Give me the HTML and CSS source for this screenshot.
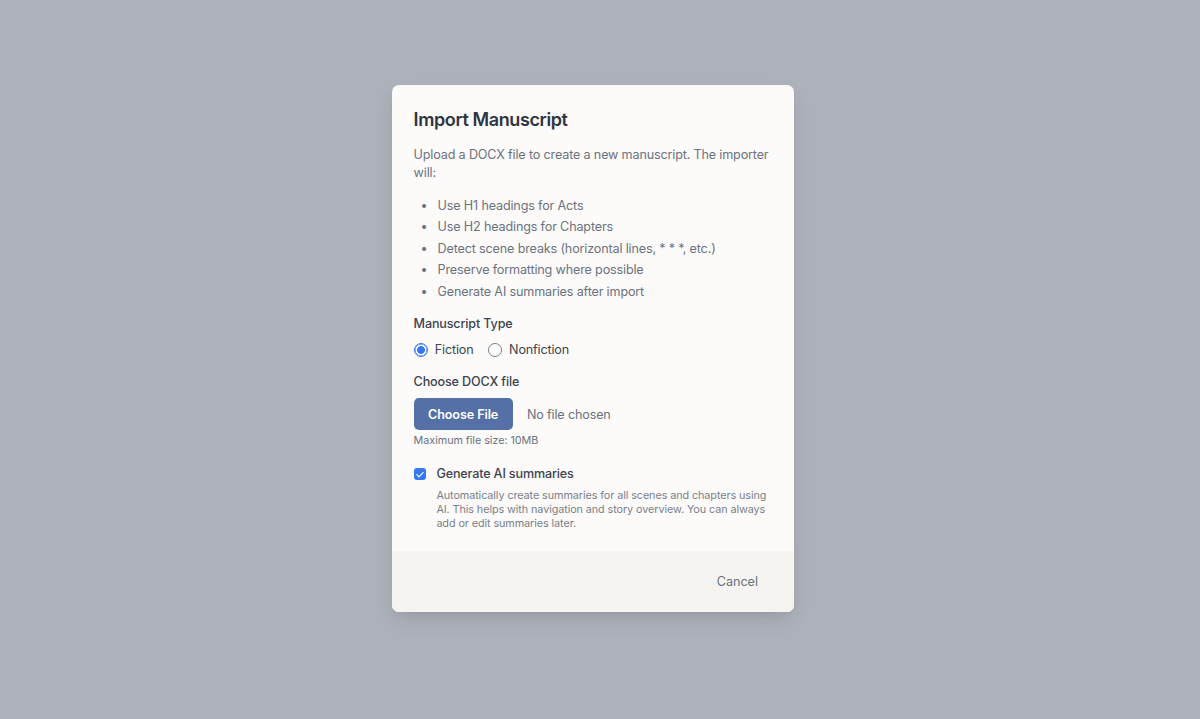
FILE: index.html
```html
<!DOCTYPE html>
<html lang="en">
<head>
<meta charset="utf-8">
<title>Import Manuscript</title>
<link rel="stylesheet" href="styles.css">
</head>
<body>
<div class="backdrop">
  <div class="modal" role="dialog" aria-labelledby="title">
    <div class="modal-body">
      <h2 id="title" class="title">Import Manuscript</h2>
      <p class="intro">Upload a DOCX file to create a new manuscript. The importer will:</p>
      <ul class="features">
        <li>Use H1 headings for Acts</li>
        <li>Use H2 headings for Chapters</li>
        <li>Detect scene breaks (horizontal lines, * * *, etc.)</li>
        <li>Preserve formatting where possible</li>
        <li>Generate AI summaries after import</li>
      </ul>

      <div class="field">
        <div class="label">Manuscript Type</div>
        <div class="radios">
          <label class="radio"><input type="radio" name="type" checked><span>Fiction</span></label>
          <label class="radio"><input type="radio" name="type"><span>Nonfiction</span></label>
        </div>
      </div>

      <div class="field">
        <div class="label">Choose DOCX file</div>
        <div class="file-row">
          <button class="choose-btn" type="button">Choose File</button>
          <span class="file-name">No file chosen</span>
        </div>
        <div class="hint">Maximum file size: 10MB</div>
      </div>

      <div class="check-field">
        <label class="check">
          <input type="checkbox" checked>
          <span class="check-label">Generate AI summaries</span>
        </label>
        <p class="check-desc">Automatically create summaries for all scenes and chapters using AI. This helps with navigation and story overview. You can always add or edit summaries later.</p>
      </div>
    </div>
    <div class="modal-footer">
      <button class="cancel-btn" type="button">Cancel</button>
    </div>
  </div>
</div>
</body>
</html>
```

FILE: styles.css
```css
* { box-sizing: border-box; }
html, body { margin: 0; padding: 0; }
body {
  background: #adb1b9;
  font-family: Inter, "Noto Sans", "Liberation Sans", sans-serif;
  -webkit-font-smoothing: antialiased;
  letter-spacing: -0.16px;
}
.backdrop {
  min-height: 719px;
  display: flex;
  justify-content: center;
  align-items: flex-start;
  padding: 85px 14px 0 0;
}
.modal {
  width: 402px;
  background: #fcfbf9;
  border-radius: 7px;
  box-shadow: 0 10px 25px -5px rgba(0,0,0,0.12), 0 4px 8px -4px rgba(0,0,0,0.08);
  overflow: hidden;
}
.modal-body {
  padding: 21.6px 21.6px 19.6px;
}
.title {
  margin: 0 0 14.4px;
  font-size: 18px;
  line-height: 25.2px;
  font-weight: 600;
  color: #2e3441;
  letter-spacing: -0.4px;
}
.intro {
  margin: 0 0 14.4px;
  font-size: 12.6px;
  line-height: 18px;
  color: #6b7280;
}
.features {
  list-style: none;
  margin: 0 0 14.4px;
  padding: 0;
  display: flex;
  flex-direction: column;
  gap: 3.6px;
}
.features li {
  display: flex;
  font-size: 12.6px;
  line-height: 18px;
  color: #6b7280;
}
.features li::before {
  content: "•";
  width: 17px;
  margin-left: 7px;
  flex: none;
  color: #6b7280;
}
.field { margin-bottom: 14.4px; }
.label {
  font-size: 12.6px;
  line-height: 18px;
  font-weight: 500;
  color: #3d4452;
  margin-bottom: 7.2px;
}
.radios {
  display: flex;
  gap: 14.4px;
  align-items: center;
}
.radio {
  display: flex;
  align-items: center;
  gap: 7.2px;
  font-size: 12.6px;
  line-height: 18px;
  color: #3d4452;
}
.radio input {
  appearance: none;
  -webkit-appearance: none;
  margin: 0;
  width: 14px;
  height: 14px;
  border: 1px solid #7b7f87;
  border-radius: 50%;
  background: #fff;
}
.radio input:checked {
  border: 1px solid #3478f6;
  background: radial-gradient(circle, #3478f6 0 3.6px, #ffffff 4.2px);
  box-shadow: inset 0 0 0 0.5px #3478f6;
}
.file-row {
  display: flex;
  align-items: center;
  gap: 14.4px;
}
.choose-btn {
  height: 32px;
  padding: 0 14.4px;
  border: none;
  border-radius: 5px;
  background: #5470a7;
  color: #ffffff;
  font-family: inherit;
  font-size: 12.6px;
  font-weight: 600;
  letter-spacing: -0.1px;
}
.file-name {
  font-size: 12.6px;
  color: #6b7280;
}
.hint {
  margin-top: 3.6px;
  font-size: 10.8px;
  line-height: 14.4px;
  color: #6b7280;
  letter-spacing: -0.05px;
}
.check-field { margin-top: 17px; }
.check {
  display: flex;
  align-items: center;
  gap: 10.8px;
}
.check input {
  appearance: none;
  -webkit-appearance: none;
  margin: 0;
  width: 12px;
  height: 12px;
  border-radius: 3px;
  background: #3478f6;
  position: relative;
  flex: none;
}
.check input:checked::after {
  content: "";
  position: absolute;
  left: 4px;
  top: 1.5px;
  width: 3px;
  height: 6px;
  border: solid #fff;
  border-width: 0 1.8px 1.8px 0;
  transform: rotate(45deg);
}
.check-label {
  font-size: 12.6px;
  line-height: 18px;
  font-weight: 500;
  color: #3d4452;
}
.check-desc {
  margin: 5.5px 0 0 22.8px;
  font-size: 10.8px;
  line-height: 14.4px;
  color: #7a808b;
  letter-spacing: -0.08px;
}
.modal-footer {
  background: #f5f4f0;
  padding: 14.4px 21.6px;
  display: flex;
  justify-content: flex-end;
}
.cancel-btn {
  height: 32px;
  padding: 0 14.4px;
  border: none;
  background: transparent;
  font-family: inherit;
  font-size: 12.6px;
  color: #6b7280;
}
```
